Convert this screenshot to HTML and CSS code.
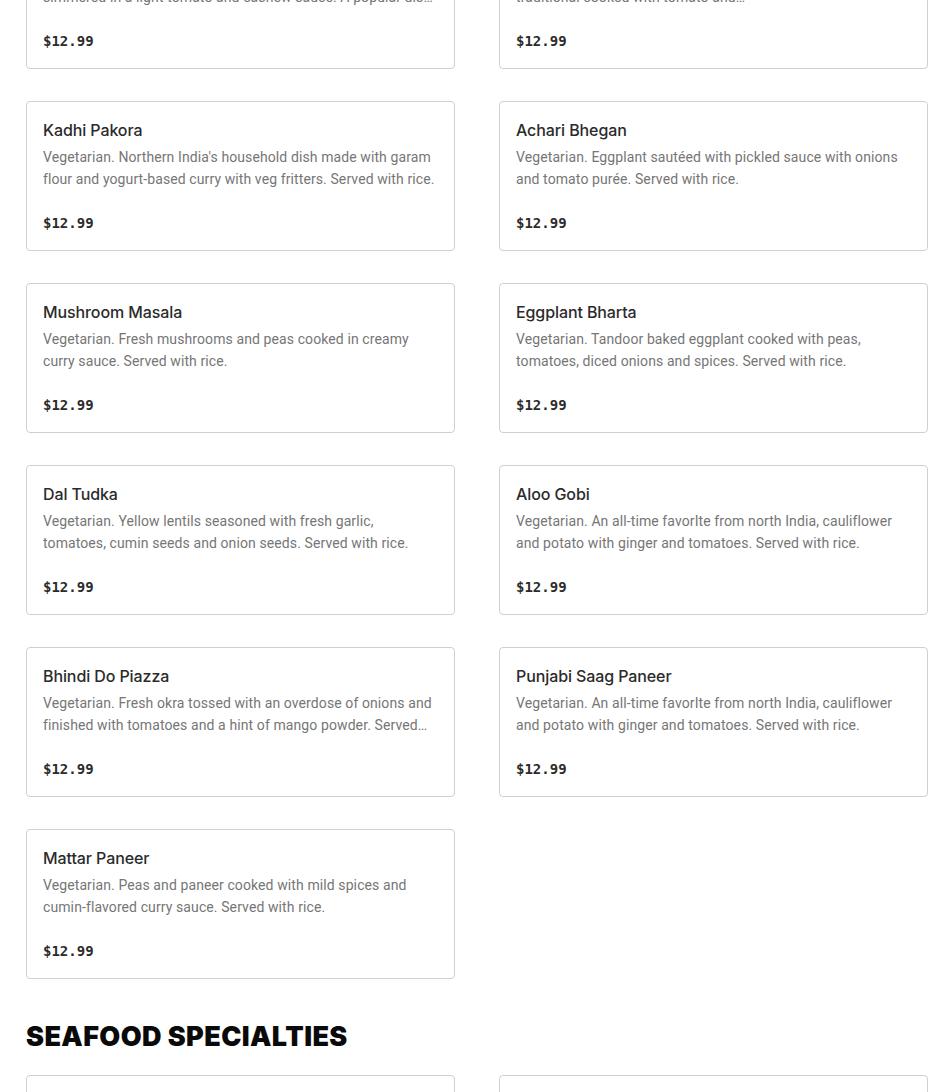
FILE: index.html
```html
<!DOCTYPE html>
<html lang="en">
<head>
<meta charset="utf-8">
<title>Menu</title>
<link rel="stylesheet" href="styles.css">
</head>
<body>
<main class="menu">
  <section class="section">
    <div class="grid">
      <article class="card">
        <h3 class="card-title">Paneer Makhani</h3>
        <p class="card-desc">Vegetarian. Cubes of soft homemade cottage cheese (paneer) simmered in a light tomato and cashew sauce. A popular dish of North India. Served with rice.</p>
        <div class="card-price">$12.99</div>
      </article>
      <article class="card">
        <h3 class="card-title">Chana Masala</h3>
        <p class="card-desc">Vegetarian. Chickpeas cooked Punjabi style, spicy and very traditional cooked with tomato and onion‑and‑ginger‑garlic‑based‑masala‑gravy. Served with rice.</p>
        <div class="card-price">$12.99</div>
      </article>
      <article class="card">
        <h3 class="card-title">Kadhi Pakora</h3>
        <p class="card-desc">Vegetarian. Northern India's household dish made with garam flour and yogurt-based curry with veg fritters. Served with rice.</p>
        <div class="card-price">$12.99</div>
      </article>
      <article class="card">
        <h3 class="card-title">Achari Bhegan</h3>
        <p class="card-desc">Vegetarian. Eggplant sautéed with pickled sauce with onions and tomato purée. Served with rice.</p>
        <div class="card-price">$12.99</div>
      </article>
      <article class="card">
        <h3 class="card-title">Mushroom Masala</h3>
        <p class="card-desc">Vegetarian. Fresh mushrooms and peas cooked in creamy curry sauce. Served with rice.</p>
        <div class="card-price">$12.99</div>
      </article>
      <article class="card">
        <h3 class="card-title">Eggplant Bharta</h3>
        <p class="card-desc">Vegetarian. Tandoor baked eggplant cooked with peas, tomatoes, diced onions and spices. Served with rice.</p>
        <div class="card-price">$12.99</div>
      </article>
      <article class="card">
        <h3 class="card-title">Dal Tudka</h3>
        <p class="card-desc">Vegetarian. Yellow lentils seasoned with fresh garlic, tomatoes, cumin seeds and onion seeds. Served with rice.</p>
        <div class="card-price">$12.99</div>
      </article>
      <article class="card">
        <h3 class="card-title">Aloo Gobi</h3>
        <p class="card-desc">Vegetarian. An all-time favorIte from north India, cauliflower and potato with ginger and tomatoes. Served with rice.</p>
        <div class="card-price">$12.99</div>
      </article>
      <article class="card">
        <h3 class="card-title">Bhindi Do Piazza</h3>
        <p class="card-desc">Vegetarian. Fresh okra tossed with an overdose of onions and finished with tomatoes and a hint of mango powder. Served with rice.</p>
        <div class="card-price">$12.99</div>
      </article>
      <article class="card">
        <h3 class="card-title">Punjabi Saag Paneer</h3>
        <p class="card-desc">Vegetarian. An all-time favorIte from north India, cauliflower and potato with ginger and tomatoes. Served with rice.</p>
        <div class="card-price">$12.99</div>
      </article>
      <article class="card">
        <h3 class="card-title">Mattar Paneer</h3>
        <p class="card-desc">Vegetarian. Peas and paneer cooked with mild spices and cumin-flavored curry sauce. Served with rice.</p>
        <div class="card-price">$12.99</div>
      </article>
    </div>
  </section>
  <section class="section">
    <h2 class="section-title">SEAFOOD SPECIALTIES</h2>
    <div class="grid">
      <article class="card">
        <h3 class="card-title">Fish Curry</h3>
        <p class="card-desc">Fish cooked in a traditional curry sauce. Served with rice.</p>
        <div class="card-price">$15.99</div>
      </article>
      <article class="card">
        <h3 class="card-title">Shrimp Masala</h3>
        <p class="card-desc">Shrimp cooked with onions, tomatoes and spices. Served with rice.</p>
        <div class="card-price">$15.99</div>
      </article>
    </div>
  </section>
</main>
</body>
</html>
```

FILE: styles.css
```css
* { box-sizing: border-box; }
html, body { margin: 0; padding: 0; background: #fff; }
body {
  font-family: Inter, "Liberation Sans", sans-serif;
  color: #2d2d2d;
  overflow: hidden;
}
.menu {
  margin-top: -81px;
  padding: 0 22px 0 26px;
}
.grid {
  display: grid;
  grid-template-columns: 1fr 1fr;
  column-gap: 44px;
  row-gap: 32px;
}
.card {
  border: 1px solid #d0d0d0;
  border-radius: 4px;
  padding: 16px 16px 15px;
  height: 150px;
  display: flex;
  flex-direction: column;
}
.card-title {
  margin: 0;
  font-size: 16px;
  line-height: 24px;
  font-weight: 500;
  color: #2b2b2b;
  letter-spacing: -0.1px;
}
.card-desc {
  margin: 4px 0 0;
  font-family: Roboto, "Liberation Sans", sans-serif;
  font-size: 14px;
  line-height: 22px;
  letter-spacing: 0.1px;
  color: #767676;
  display: -webkit-box;
  -webkit-line-clamp: 2;
  -webkit-box-orient: vertical;
  overflow: hidden;
  height: 44px;
}
.card-price {
  margin-top: 21px;
  font-family: "DejaVu Sans Mono", "Liberation Mono", monospace;
  font-weight: 700;
  font-size: 14px;
  line-height: 24px;
  color: #2b2b2b;
}
.section-title {
  margin: 42px 0 22px;
  font-family: Inter, "Liberation Sans", sans-serif;
  font-weight: 900;
  font-size: 27px;
  line-height: 32px;
  color: #0a0a0a;
  letter-spacing: 0.4px;
}
```
